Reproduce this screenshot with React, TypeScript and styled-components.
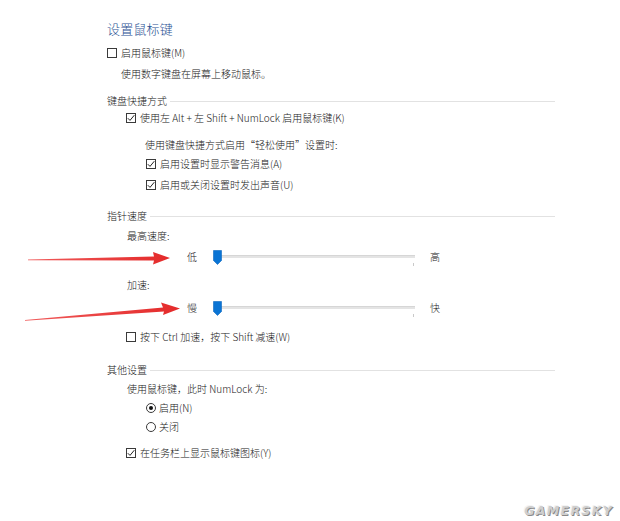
import React from "react";
import styled, { createGlobalStyle } from "styled-components";

const GlobalStyle = createGlobalStyle`
  html, body { margin: 0; padding: 0; background: #ffffff; }
  body { font-family: "Noto Sans CJK SC", "Noto Sans", sans-serif; color: #202020; font-weight: 300; }
`;

const Page = styled.div`
  position: relative;
  width: 620px;
  height: 521px;
  overflow: hidden;
  box-sizing: border-box;
  padding: 20px 0 0 107px;
  background: #fff;
`;

const Title = styled.div`
  font-size: 13px;
  line-height: 18px;
  height: 18px;
  color: #1f4f92;
  letter-spacing: 0.2px;
`;

const Row = styled.div<{ $gap: number; $indent: number }>`
  display: flex;
  align-items: center;
  height: 14px;
  margin-top: ${(p) => p.$gap}px;
  padding-left: ${(p) => p.$indent}px;
  font-size: 10px;
  line-height: 14px;
  white-space: nowrap;
`;

const Label = styled.span`
  font-size: 10px;
`;

const GroupHeader = styled(Row)`
  width: 448px;
  box-sizing: border-box;
`;

const HeaderLine = styled.div`
  flex: 1;
  height: 1px;
  background: #e2e2e2;
  margin-left: 3px;
`;

const Box = styled.span`
  flex: none;
  width: 10px;
  height: 10px;
  box-sizing: border-box;
  border: 1px solid #3a3a3a;
  background: #fff;
  margin-right: 4px;
  display: inline-flex;
  align-items: center;
  justify-content: center;
`;

const RadioCircle = styled.span`
  flex: none;
  width: 10px;
  height: 10px;
  box-sizing: border-box;
  border: 1px solid #3a3a3a;
  border-radius: 50%;
  background: #fff;
  margin-right: 3px;
  display: inline-flex;
  align-items: center;
  justify-content: center;
`;

const RadioDot = styled.span`
  width: 4px;
  height: 4px;
  border-radius: 50%;
  background: #111;
`;

const SliderRow = styled.div<{ $gap: number }>`
  display: flex;
  align-items: center;
  height: 20px;
  margin-top: ${(p) => p.$gap}px;
  padding-left: 80px;
  font-size: 10px;
`;

const SliderEnd = styled.span<{ $ml: number }>`
  width: 10px;
  margin-left: ${(p) => p.$ml}px;
  font-size: 10px;
  line-height: 20px;
`;

const SliderBody = styled.div`
  position: relative;
  width: 202px;
  height: 20px;
  margin-left: 16px;
`;

const Track = styled.div`
  position: absolute;
  left: 2px;
  right: 0;
  top: 8px;
  height: 3px;
  background: #e4e4e4;
  border-top: 1px solid #d6d6d6;
  box-sizing: border-box;
`;

const Tick = styled.div`
  position: absolute;
  right: 1px;
  top: 16px;
  width: 1px;
  height: 3px;
  background: #c9c9c9;
`;

const Thumb = styled.svg`
  position: absolute;
  left: 0;
  top: 3px;
`;

const Overlay = styled.svg`
  position: absolute;
  left: 0;
  top: 0;
  pointer-events: none;
`;

const Watermark = styled.div`
  position: absolute;
  right: 7px;
  bottom: 3px;
  font-family: "DejaVu Sans", sans-serif;
  font-weight: 900;
  font-style: italic;
  font-size: 12.5px;
  letter-spacing: 1.3px;
  color: #cfcfcf;
  text-shadow: 1px 1px 0 #8a8a8a, -1px -1px 0 #f4f4f4;
`;

const Check = () => (
  <svg width="8" height="8" viewBox="0 0 8 8">
    <path d="M0.8 4.2 L3 6.4 L7.3 1.2" fill="none" stroke="#222" strokeWidth="1" />
  </svg>
);

const CheckBox: React.FC<{ checked?: boolean; label: string; gap: number; indent: number }> = ({
  checked,
  label,
  gap,
  indent,
}) => (
  <Row $gap={gap} $indent={indent}>
    <Box>{checked && <Check />}</Box>
    <Label>{label}</Label>
  </Row>
);

const Radio: React.FC<{ checked?: boolean; label: string; gap: number; indent: number }> = ({
  checked,
  label,
  gap,
  indent,
}) => (
  <Row $gap={gap} $indent={indent}>
    <RadioCircle>{checked && <RadioDot />}</RadioCircle>
    <Label>{label}</Label>
  </Row>
);

const Header: React.FC<{ label: string; gap: number }> = ({ label, gap }) => (
  <GroupHeader $gap={gap} $indent={0}>
    <Label>{label}</Label>
    <HeaderLine />
  </GroupHeader>
);

const Slider: React.FC<{ low: string; high: string; gap: number }> = ({ low, high, gap }) => (
  <SliderRow $gap={gap}>
    <SliderEnd $ml={0}>{low}</SliderEnd>
    <SliderBody>
      <Track />
      <Tick />
      <Thumb width="9" height="15" viewBox="0 0 9 15">
        <path d="M0.5 0.5 H8.5 V10.5 L4.5 14.5 L0.5 10.5 Z" fill="#0a74d4" stroke="#0a66c0" strokeWidth="0.6" />
      </Thumb>
    </SliderBody>
    <SliderEnd $ml={15}>{high}</SliderEnd>
  </SliderRow>
);

export default function App() {
  return (
    <>
      <GlobalStyle />
      <Page>
        <Title>设置鼠标键</Title>
        <CheckBox label="启用鼠标键(M)" gap={8} indent={0} />
        <Row $gap={7} $indent={14}>
          <Label>使用数字键盘在屏幕上移动鼠标。</Label>
        </Row>

        <Header label="键盘快捷方式" gap={13} />
        <CheckBox checked label="使用左 Alt + 左 Shift + NumLock 启用鼠标键(K)" gap={3} indent={19} />
        <Row $gap={13} $indent={38}>
          <Label>使用键盘快捷方式启用“轻松使用”设置时:</Label>
        </Row>
        <CheckBox checked label="启用设置时显示警告消息(A)" gap={5} indent={39} />
        <CheckBox checked label="启用或关闭设置时发出声音(U)" gap={7} indent={39} />

        <Header label="指针速度" gap={17} />
        <Row $gap={6} $indent={20}>
          <Label>最高速度:</Label>
        </Row>
        <Slider low="低" high="高" gap={4} />
        <Row $gap={11} $indent={20}>
          <Label>加速:</Label>
        </Row>
        <Slider low="慢" high="快" gap={6} />
        <CheckBox label="按下 Ctrl 加速，按下 Shift 减速(W)" gap={12} indent={19} />

        <Header label="其他设置" gap={19} />
        <Row $gap={5} $indent={20}>
          <Label>使用鼠标键，此时 NumLock 为:</Label>
        </Row>
        <Radio checked label="启用(N)" gap={5} indent={39} />
        <Radio label="关闭" gap={5} indent={39} />
        <CheckBox checked label="在任务栏上显示鼠标键图标(Y)" gap={12} indent={19} />

        <Overlay width="620" height="521" viewBox="0 0 620 521">
          <defs>
            <linearGradient id="arr" x1="0" x2="1" y1="0" y2="0">
              <stop offset="0" stopColor="#f05a5a" />
              <stop offset="1" stopColor="#e42a2a" />
            </linearGradient>
          </defs>
          <polygon
            points="28,259.5 154,256.6 153,252 170,258 153,264.5 154,260.4 28,260.3"
            fill="url(#arr)"
          />
          <polygon
            points="25,320 163,307.6 161,302.5 180,308.5 163,315 164,311.4 25,320.8"
            fill="url(#arr)"
          />
        </Overlay>
        <Watermark>GAMERSKY</Watermark>
      </Page>
    </>
  );
}
